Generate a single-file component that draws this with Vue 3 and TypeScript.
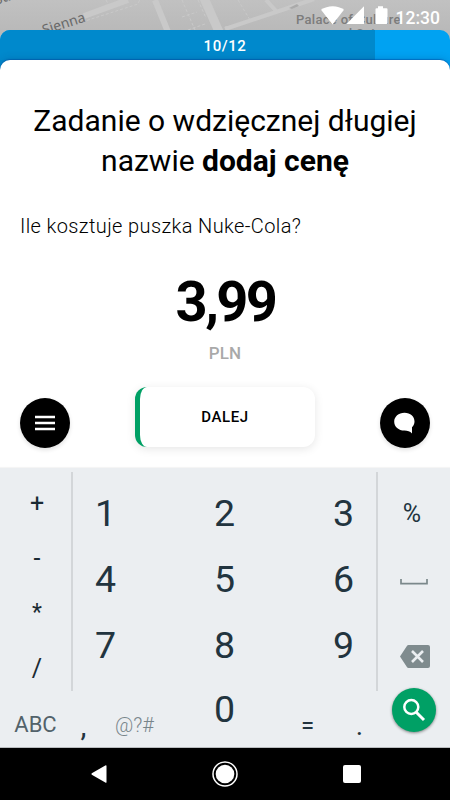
<script setup lang="ts">
const operators = ['+', '-', '*', '/']
const digits = ['1', '2', '3', '4', '5', '6', '7', '8', '9']
const step = 10
const total = 12
</script>

<template>
  <main class="screen">
    <svg class="map" width="450" height="76" viewBox="0 0 450 76">
      <defs>
        <linearGradient id="map-shade" x2="0" y2="1">
          <stop offset="0" stop-color="#c1c1c1" />
          <stop offset=".4" stop-color="#b9b9b9" />
        </linearGradient>
      </defs>
      <rect width="450" height="76" fill="url(#map-shade)" />
      <g fill="none" stroke="#c9c9c9">
        <path d="M84 16 128 0" stroke-width="6" />
        <path d="M155 0 168 32" stroke-width="6" />
        <path d="M204-2 220 34" stroke-width="9" />
        <path d="M225 29 285 9 314-1M266 0 277 12" stroke-width="4" />
        <path d="M82 22 138 4 140-1M106 0l4 8M182 0l13 30M182 17l15-5M188 30l17-6M198 0l8 18M225 27l24-5M238 0l12 20" stroke-width="1" stroke-dasharray="3 2" />
      </g>
      <path d="m289 8 8-4 2 2-7 3z" fill="#aaa" />
      <g class="map-label">
        <text x="-4" y="5" transform="rotate(-18 -4 5)">St.</text>
        <text x="44" y="35" transform="rotate(-18 44 35)">Sienna</text>
        <text class="place" x="296" y="23.5">Palace of Culture</text>
        <text class="place" x="330" y="38">and Science</text>
      </g>
    </svg>

    <header class="status">
      <svg width="68" height="20" viewBox="0 0 68 20" fill="#fff">
        <path d="M0 3.8C6.5-1.1 17-1.1 23 3.8L11.5 18.5z" />
        <path d="M43 .3V18H25.500z" />
        <path d="M57 .3h5v2h3.500q1 0 1 1V17q0 1-1 1h-10q-1 0-1-1V3.300q0-1 1-1H57z" />
      </svg>
      <span class="clock">12:30</span>
    </header>

    <section class="task">
      <div class="progress">
        <div class="progress-fill" :style="{ width: (step / total) * 100 + '%' }"></div>
        <span class="progress-text">{{ step }}/{{ total }}</span>
      </div>
      <div class="sheet">
        <h1>Zadanie o wdzięcznej długiej nazwie <b>dodaj cenę</b></h1>
        <p class="question">Ile kosztuje puszka Nuke-Cola?</p>
        <div class="price">3,99</div>
        <div class="currency">PLN</div>
        <div class="actions">
          <button class="round" aria-label="Menu">
            <svg width="20" height="16" viewBox="0 0 20 16">
              <path d="M0 2h20M0 8h20M0 14h20" stroke="#fff" stroke-width="2.500" />
            </svg>
          </button>
          <button class="next"><span>DALEJ</span></button>
          <button class="round" aria-label="Czat">
            <svg width="22" height="22" viewBox="0 0 22 22">
              <path d="M10.500.8C16.500.8 20.500 4.600 20.500 9.500c0 2.300-.8 4-2.500 5.700v6.300c-2-2.200-4.500-3-7.500-3C4.500 18.500.2 14.700.2 9.700S4.500.8 10.500.8z" fill="#fff" />
            </svg>
          </button>
        </div>
      </div>
    </section>

    <section class="keyboard">
      <div class="keys">
        <div class="operators">
          <span v-for="op in operators" :key="op" :class="{ star: op === '*' }">{{ op }}</span>
        </div>
        <div class="digits">
          <span v-for="d in digits" :key="d">{{ d }}</span>
        </div>
        <div class="extras">
          <span class="percent">%</span>
          <svg class="space" width="28" height="6" viewBox="0 0 28 6">
            <path d="M1 0v4.600h26V0" fill="none" stroke="#7b888b" stroke-width="1.700" />
          </svg>
          <svg class="backspace" width="30" height="23" viewBox="0 0 30 23">
            <path d="M8.500 0H28q2 0 2 2v19q0 2-2 2H8.500q-1 0-1.600-1L0 11.500 6.900 1q.6-1 1.600-1z" fill="#7f8b8e" />
            <path d="m12 6 11 11M23 6 12 17" stroke="#ebeef1" stroke-width="2.600" />
          </svg>
        </div>
      </div>
      <div class="bottom-keys">
        <span class="abc">ABC</span>
        <span class="comma">,</span>
        <span class="symbols">@?#</span>
        <span class="zero">0</span>
        <span class="equals">=</span>
        <span class="dot">.</span>
        <button class="search" aria-label="Szukaj">
          <svg width="24" height="24" viewBox="0 0 24 24" fill="none" stroke="#fff">
            <circle cx="9.300" cy="9" r="7" stroke-width="2.500" />
            <path d="m14 14 8 8" stroke-width="3" />
          </svg>
        </button>
      </div>
    </section>

    <nav class="navbar">
      <svg width="16" height="20" viewBox="0 0 16 20">
        <path d="M15.500 2v16q0 1.300-1.200.6L.8 10.800Q0 10 .8 9.200L14.300 1.400q1.200-.7 1.200.6z" fill="#fff" />
      </svg>
      <svg width="26" height="26" viewBox="0 0 26 26">
        <circle cx="13" cy="13" r="12" fill="none" stroke="#fff" stroke-width="1.500" />
        <circle cx="13" cy="13" r="9.300" fill="#fff" />
      </svg>
      <svg width="18" height="18" viewBox="0 0 18 18">
        <rect width="18" height="18" rx="2" fill="#fff" />
      </svg>
    </nav>
  </main>
</template>

<style>
body {
  margin: 0;
}
</style>

<style scoped>
.screen {
  position: relative;
  display: flex;
  flex-direction: column;
  width: 450px;
  height: 800px;
  overflow: hidden;
  font-family: Roboto, "Liberation Sans", sans-serif;
  color: #000;
}

button {
  padding: 0;
  border: 0;
  font: inherit;
  color: inherit;
}

svg {
  display: block;
  flex: none;
}

.map {
  position: absolute;
  top: 0;
  left: 0;
}

.map-label {
  font-family: "Noto Sans", sans-serif;
  font-size: 14px;
  fill: #696969;
}

.place {
  font-family: Roboto, sans-serif;
  font-size: 13px;
  font-weight: 500;
  letter-spacing: .3px;
  fill: #7c7c7c;
}

.status {
  position: relative;
  display: flex;
  flex: none;
  justify-content: flex-end;
  box-sizing: border-box;
  height: 30px;
  padding: 6px 10px 0 0;
  gap: 7px;
}

.status svg {
  margin-right: -1px;
}

.clock {
  width: 45px;
  font-size: 17.5px;
  font-weight: 500;
  line-height: 24px;
  text-align: right;
  color: #fff;
}

.task {
  position: relative;
  display: flex;
  flex-direction: column;
  flex: none;
  height: 438px;
}

.progress {
  display: grid;
  flex: none;
  height: 42px;
  margin-bottom: -12px;
  overflow: hidden;
  background: #00a2f2;
  border-radius: 10px 10px 0 0;
}

.progress-fill,
.progress-text {
  grid-area: 1 / 1;
}

.progress-fill {
  background: #0089cc;
}

.progress-text {
  font-size: 15px;
  font-weight: 500;
  line-height: 33px;
  letter-spacing: .6px;
  text-align: center;
  color: #fff;
}

.sheet {
  position: relative;
  display: flex;
  flex: 1;
  flex-direction: column;
  background: #fff;
  border-radius: 10px 10px 0 0;
  box-shadow: 0 -1px 1px rgba(0, 60, 150, .4), 0 0 8px rgba(0, 50, 110, .3);
}

h1 {
  margin: 41px 20px 0;
  font-size: 30px;
  font-weight: 400;
  line-height: 40px;
  text-align: center;
}

h1 b {
  font-weight: 700;
}

.question {
  margin: 32px 20px 0;
  font-size: 20px;
  font-weight: 300;
  line-height: 26px;
  letter-spacing: .38px;
}

.price {
  margin-top: 31px;
  padding-left: 1px;
  font-size: 56px;
  font-weight: 700;
  line-height: 64px;
  letter-spacing: -2.6px;
  text-align: center;
}

.currency {
  margin-top: 8px;
  font-size: 17px;
  font-weight: 500;
  line-height: 22px;
  letter-spacing: .2px;
  text-align: center;
  color: #a9a9a9;
}

.actions {
  display: flex;
  align-items: flex-start;
  justify-content: space-between;
  padding: 23px 20px 0;
}

.round {
  display: grid;
  place-items: center;
  width: 50px;
  height: 50px;
  margin-top: 11px;
  background: #000;
  border-radius: 50%;
  box-shadow: 0 2px 4px rgba(0, 0, 0, .12);
}

.next {
  width: 180px;
  height: 60px;
  padding-right: 5px;
  background: #fff;
  border-left: 5px solid #00a065;
  border-radius: 12px;
  box-shadow: 0 2px 10px rgba(0, 0, 0, .1);
  font-size: 15px;
  font-weight: 500;
  letter-spacing: .6px;
}

.keyboard {
  position: relative;
  flex: none;
  box-sizing: border-box;
  height: 280px;
  padding-top: 4px;
  background: #ebeef1;
  border-bottom: 1px solid #b9bcbf;
  box-shadow: 0 -1px 1px #f5f5f5;
  color: #22343f;
}

.keys {
  display: grid;
  grid-template-columns: 71px 307px 72px;
  grid-template-rows: 219px;
}

.operators {
  display: grid;
  grid-template-rows: repeat(4, 55px);
  padding: 4px 0 0 3px;
  font-size: 25px;
  line-height: 55px;
  text-align: center;
  color: #1a2a33;
}

.operators .star {
  font-size: 23px;
  line-height: 53px;
}

.digits {
  display: grid;
  grid-template-columns: repeat(3, 119px);
  grid-auto-rows: 66px;
  justify-content: center;
  box-sizing: border-box;
  padding-top: 8px;
  border: solid #d3d6d9;
  border-width: 0 2px;
  font-size: 37.5px;
  line-height: 66px;
  text-align: center;
}

.extras {
  display: flex;
  flex-direction: column;
  align-items: center;
  padding-right: 1px;
}

.percent {
  margin: 26px 3px 0 0;
  font-size: 25px;
  line-height: 32px;
}

.space {
  margin-top: 49px;
}

.backspace {
  margin: 60px 0 0 3px;
}

.bottom-keys {
  display: grid;
  grid-template-columns: 71px 25px 77px 103px 63px 41px 70px;
  line-height: 30px;
  text-align: center;
}

.abc {
  padding-top: 19px;
  font-size: 22px;
  color: #52626a;
}

.comma {
  padding-top: 20px;
  font-size: 30px;
}

.symbols {
  padding-top: 19px;
  font-size: 20px;
  font-weight: 300;
  color: #78858a;
}

.zero {
  font-size: 37.5px;
  line-height: 37px;
}

.equals {
  padding-top: 20px;
  font-size: 24px;
}

.dot {
  padding-top: 20px;
  font-size: 28px;
}

.search {
  display: grid;
  place-items: center;
  width: 44px;
  height: 44px;
  margin: -3px 0 0 12px;
  background: #00a065;
  border-radius: 50%;
  box-shadow: 0 1px 3px rgba(0, 0, 0, .45);
}

.navbar {
  display: flex;
  flex: 1;
  align-items: center;
  justify-content: space-between;
  padding: 0 89px 0 91px;
  background: #000;
}
</style>
